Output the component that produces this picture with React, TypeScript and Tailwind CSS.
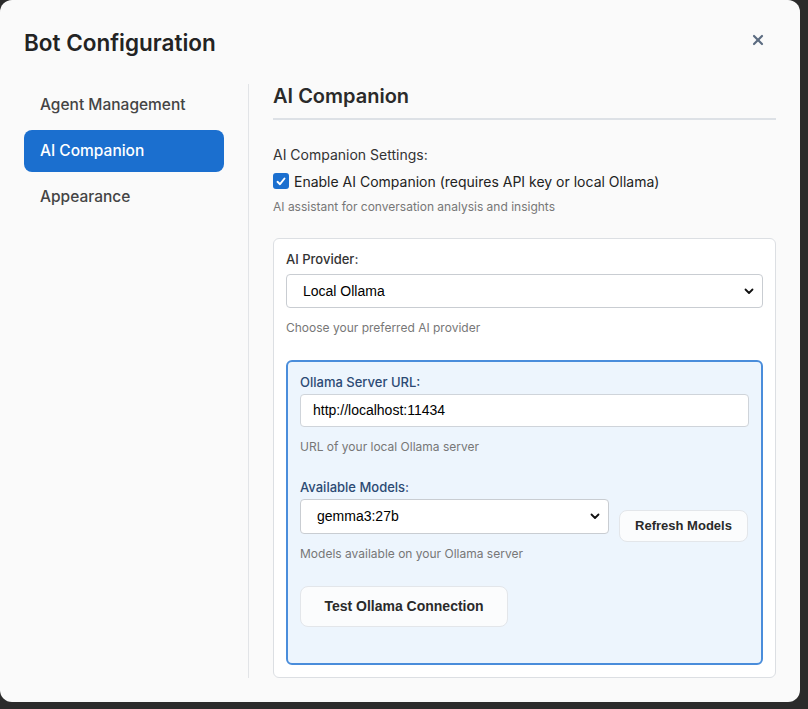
import { X } from "lucide-react";

const sans = "font-['Inter','Noto_Sans',sans-serif]";
const arial = "font-['Liberation_Sans',Arial,sans-serif]";

function Chevron() {
  return (
    <svg width="10" height="7" viewBox="0 0 10 7" className="shrink-0">
      <path d="M1.5 1.5 L5 5 L8.5 1.5" fill="none" stroke="#111" strokeWidth="1.8" strokeLinecap="round" strokeLinejoin="round" />
    </svg>
  );
}

function SelectBox({ value, className }: { value: string; className: string }) {
  return (
    <div
      className={`flex items-center justify-between rounded border border-[#c9cdd2] bg-white pl-4 pr-[8px] text-[14px] text-black ${arial} ${className}`}
    >
      <span>{value}</span>
      <Chevron />
    </div>
  );
}

export default function App() {
  const nav = ["Agent Management", "AI Companion", "Appearance"];
  const active = "AI Companion";

  return (
    <div className={`min-h-[709px] w-[808px] bg-[#2b2b2b] ${sans}`}>
      <div className="flex h-[702px] w-[800px] flex-col rounded-xl bg-[#fafafa] p-6">
        {/* header */}
        <div className="flex h-[38px] items-center justify-between">
          <h1 className="text-[22.5px] font-semibold text-[#232323]">Bot Configuration</h1>
          <button className="mr-[10px] -mt-[6px] text-[#5b6b80]">
            <X size={16} strokeWidth={3.2} />
          </button>
        </div>

        <div className="mt-[22px] flex min-h-0 flex-1">
          {/* sidebar */}
          <div className="flex w-[200px] flex-col gap-1">
            {nav.map((n) => (
              <div
                key={n}
                className={`flex h-[42px] items-center rounded-lg px-4 text-[15.5px] font-medium ${
                  n === active ? "bg-[#1b6fcf] text-white" : "text-[#444]"
                }`}
              >
                {n}
              </div>
            ))}
          </div>

          <div className="ml-6 w-px bg-[#e2e4e7]" />

          {/* content */}
          <div className="flex-1 pl-6">
            <div className="border-b-2 border-[#dde1e6] pb-[10px]">
              <h2 className="text-[20px] font-semibold leading-6 text-[#2a2a2a]">AI Companion</h2>
            </div>

            <div className="mt-[25px] text-[14px] leading-5 text-[#333]">AI Companion Settings:</div>
            <label className="mt-[6px] flex h-5 items-center gap-[5px] text-[14px] text-[#222]">
              <span className="flex h-4 w-4 items-center justify-center rounded-[3px] bg-[#1b6fcf]">
                <svg width="10" height="9" viewBox="0 0 10 9">
                  <path d="M1.5 4.8 L4 7.2 L8.5 1.5" fill="none" stroke="white" strokeWidth="1.9" strokeLinecap="round" strokeLinejoin="round" />
                </svg>
              </span>
              Enable AI Companion (requires API key or local Ollama)
            </label>
            <div className="mt-2 text-[12px] leading-4 text-[#777]">
              AI assistant for conversation analysis and insights
            </div>

            {/* provider card */}
            <div className="mt-[23px] rounded-md border border-[#dcdfe3] bg-white p-3">
              <div className="text-[13px] font-medium leading-4 text-[#333]">AI Provider:</div>
              <SelectBox value="Local Ollama" className="mt-[7px] h-[34px]" />
              <div className="mt-3 text-[12px] leading-4 text-[#777]">Choose your preferred AI provider</div>

              <div className="mt-6 rounded-md border-2 border-[#4a8ddb] bg-[#edf5fd] px-3 pt-3 pb-[36px]">
                <div className="text-[13px] font-medium leading-4 text-[#2c4a74]">Ollama Server URL:</div>
                <div
                  className={`mt-1 flex h-[33px] items-center rounded border border-[#cfd4da] bg-white px-3 text-[14px] text-black ${arial}`}
                >
                  http://localhost:11434
                </div>
                <div className="mt-3 text-[12px] leading-4 text-[#777]">URL of your local Ollama server</div>

                <div className="mt-6 text-[13px] font-medium leading-4 text-[#2c4a74]">Available Models:</div>
                <div className="mt-1 flex items-start gap-[10px]">
                  <SelectBox value="gemma3:27b" className="h-[35px] w-[309px]" />
                  <button
                    className={`mt-[11px] h-[32px] w-[129px] rounded-lg border border-[#e3e6ea] bg-[#fbfcfd] text-[13px] font-bold text-[#2a2a2a] ${arial}`}
                  >
                    Refresh Models
                  </button>
                </div>
                <div className="mt-1 text-[12px] leading-4 text-[#777]">Models available on your Ollama server</div>

                <button
                  className={`mt-6 h-[41px] w-[208px] rounded-lg border border-[#e3e6ea] bg-[#fbfcfd] text-[14px] font-bold text-[#2a2a2a] ${arial}`}
                >
                  Test Ollama Connection
                </button>
              </div>
            </div>
          </div>
        </div>
      </div>
    </div>
  );
}
